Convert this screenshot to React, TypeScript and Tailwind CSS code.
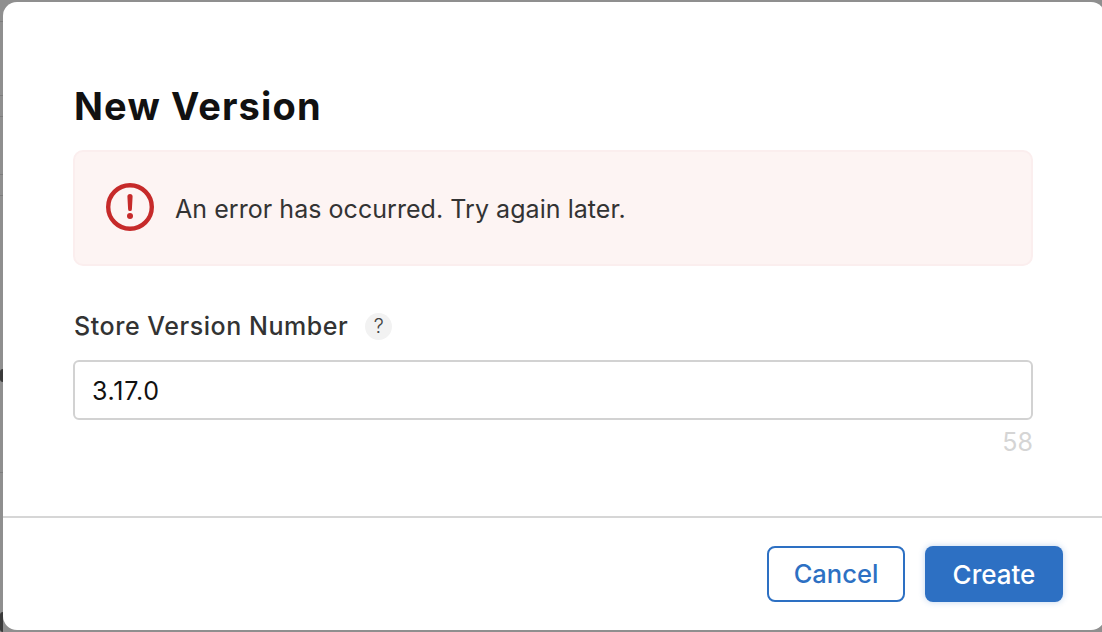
// Faint page content showing behind the backdrop, left of the dialog
const backdropLines = [21, 95, 116, 174, 195, 472];

function ErrorIcon() {
  return (
    <svg viewBox="0 0 48 48" className="h-[48px] w-[48px] shrink-0 text-[#c62a2a]" fill="none">
      <circle cx="24" cy="24" r="21.8" stroke="currentColor" strokeWidth="4.4" />
      <path d="M21.4 13.6a2.6 2.6 0 0 1 5.2 0l-.7 12.6a1.9 1.9 0 0 1-3.8 0z" fill="currentColor" />
      <circle cx="24" cy="33" r="3" fill="currentColor" />
    </svg>
  );
}

export default function App() {
  return (
    <div className="flex h-[632px] w-[1102px] overflow-hidden bg-[#8f8f8f] pt-[2px] font-['Inter',sans-serif]">
      <div className="relative -mt-[2px] h-[632px] w-[3px] shrink-0">
        {backdropLines.map((y) => (
          <div key={y} className="absolute left-0 h-px w-[3px] bg-[#7d7d7d]" style={{ top: y }} />
        ))}
        <div className="absolute top-[369px] left-0 h-[13px] w-[3px] rounded-l-sm bg-[#3a3a3a]" />
        <div className="absolute top-[612px] left-0 h-[20px] w-[3px] rounded-l-full bg-[#3a3a3a]" />
      </div>

      <div className="flex h-[628px] w-[1102px] shrink-0 flex-col rounded-[14px] bg-white">
        {/* Body */}
        <div className="flex h-[514px] flex-col pt-[80px] pl-[70px] pr-[72px]">
          <h1 className="h-[48px] pl-px text-[38px] leading-[48px] font-bold tracking-[1.15px] text-[#111111]">New Version</h1>

          <div className="mt-[20px] flex h-[116px] items-center gap-[21px] rounded-[10px] border-2 border-[#fbeeee] bg-[#fdf4f3] pb-[2px] pl-[31px]">
            <ErrorIcon />
            <span className="pt-[4px] text-[25px] leading-[32px] tracking-[0.05px] text-[#333333]">An error has occurred. Try again later.</span>
          </div>

          <div className="mt-[44px] mb-px flex h-[32px] items-center pl-px">
            <span className="text-[25px] leading-[32px] font-medium tracking-[0.55px] text-[#333333]">Store Version Number</span>
            <span className="ml-[17px] flex h-[27px] w-[27px] items-center justify-center rounded-full bg-[#f2f2f2] text-[20px] font-light text-[#444444]">?</span>
          </div>

          <input
            readOnly
            value="3.17.0"
            className="mt-[17px] h-[60px] w-full rounded-[6px] border-2 border-[#d2d2d2] bg-white px-[17px] pt-px text-[25px] tracking-[0.7px] text-[#111111] outline-none"
          />
          <div className="mt-[6px] text-right text-[25px] leading-[32px] text-[#d5d5d5]">58</div>
        </div>

        {/* Footer */}
        <div className="flex flex-1 items-start justify-end gap-[20px] border-t-2 border-[#d6d6d6] pt-[28px] pr-[42px]">
          <button className="h-[56px] w-[138px] rounded-[8px] border-2 border-[#2d70c3] bg-white text-[25.5px] font-medium text-[#2d70c3]">Cancel</button>
          <button className="h-[56px] w-[138px] rounded-[8px] bg-[#2d70c3] text-[26px] font-medium text-white shadow-[0_0_6px_rgba(45,112,195,0.3)]">Create</button>
        </div>
      </div>
    </div>
  );
}
